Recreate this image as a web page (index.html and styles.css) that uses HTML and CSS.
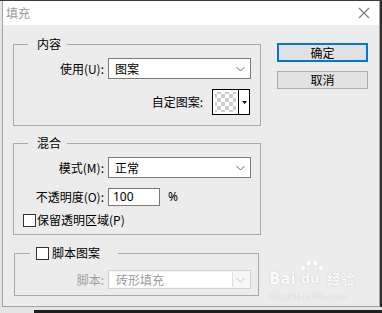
FILE: index.html
```html
<!DOCTYPE html>
<html lang="zh">
<head>
<meta charset="utf-8">
<title>填充</title>
<link rel="stylesheet" href="styles.css">
</head>
<body>
<div class="screen">
  <div class="topline"></div>
  <div class="mid">
    <div class="edge-left"></div>
    <div class="dialog">
      <div class="titlebar">
        <span class="title">填充</span>
        <svg class="close" width="12" height="12" viewBox="0 0 12 12"><path d="M1 1 L11 11 M11 1 L1 11" stroke="#7a7a7a" stroke-width="1.1" fill="none"/></svg>
      </div>
      <div class="body">
        <div class="groups">
          <fieldset class="group g1">
            <legend class="legend">内容</legend>
            <div class="row r-select">
              <span class="lbl">使用(U):</span>
              <div class="select"><span class="val">图案</span><svg class="chev" width="9" height="6" viewBox="0 0 9 6"><path d="M0.5 1 L4.5 5 L8.5 1" stroke="#6d6d6d" fill="none"/></svg></div>
            </div>
            <div class="row r-swatch">
              <span class="lbl2">自定图案:</span>
              <div class="swatch">
                <div class="checker"></div>
                <div class="swatch-arrow"><svg width="5" height="3" viewBox="0 0 5 3"><path d="M0 0 H5 L2.5 3 Z" fill="#000"/></svg></div>
              </div>
            </div>
          </fieldset>

          <fieldset class="group g2">
            <legend class="legend">混合</legend>
            <div class="row r-select">
              <span class="lbl">模式(M):</span>
              <div class="select"><span class="val">正常</span><svg class="chev" width="9" height="6" viewBox="0 0 9 6"><path d="M0.5 1 L4.5 5 L8.5 1" stroke="#6d6d6d" fill="none"/></svg></div>
            </div>
            <div class="row r-input">
              <span class="lbl">不透明度(O):</span>
              <div class="input">100</div>
              <span class="pct">%</span>
            </div>
            <div class="row r-check">
              <span class="checkbox"></span>
              <span class="check-text">保留透明区域(P)</span>
            </div>
          </fieldset>

          <fieldset class="group g3">
            <legend class="legend legend-check"><span class="checkbox"></span><span class="check-text">脚本图案</span></legend>
            <div class="row r-disabled">
              <span class="lbl lbl-dis">脚本:</span>
              <div class="select select-dis"><span class="val-box">砖形填充</span><svg class="chev" width="9" height="6" viewBox="0 0 9 6"><path d="M0.5 1 L4.5 5 L8.5 1" stroke="#c4c4c4" fill="none"/></svg></div>
            </div>
          </fieldset>
        </div>
        <div class="buttons">
          <div class="btn btn-default">确定</div>
          <div class="btn">取消</div>
        </div>
      </div>
      <div class="watermark">
        <div class="wm-logo">
          <span class="wm-bai">Bai</span>
          <span class="wm-paw">
            <svg width="26" height="16" viewBox="0 0 26 16"><ellipse cx="4" cy="10" rx="2.6" ry="3.2" fill="#fbfbfb" stroke="#d9d9d9" stroke-width="0.6"/><ellipse cx="9.5" cy="5" rx="2.8" ry="3.4" fill="#fbfbfb" stroke="#d9d9d9" stroke-width="0.6"/><ellipse cx="16.5" cy="5" rx="2.8" ry="3.4" fill="#fbfbfb" stroke="#d9d9d9" stroke-width="0.6"/><ellipse cx="22" cy="10" rx="2.6" ry="3.2" fill="#fbfbfb" stroke="#d9d9d9" stroke-width="0.6"/></svg>
            <span class="wm-du">du</span>
          </span>
          <span class="wm-jy">经验</span>
        </div>
        <div class="wm-url">jingyan.baidu.com</div>
      </div>
    </div>
    <div class="edge-right"></div>
  </div>
  <div class="bottom"><div class="bottom-dark"></div></div>
</div>
</body>
</html>
```

FILE: styles.css
```css
* { box-sizing: border-box; }
html, body { margin: 0; padding: 0; }
body {
  width: 382px;
  height: 313px;
  overflow: hidden;
  font-family: "Noto Sans CJK SC", "Noto Sans", sans-serif;
  font-size: 12px;
  color: #000;
}
.screen {
  width: 382px;
  height: 313px;
  background: #e4e4e4;
  display: flex;
  flex-direction: column;
}
.topline { height: 1px; background: #3c3c3c; }
.mid { display: flex; height: 306px; }
.edge-left { width: 2px; background: #e4e4e4; }
.edge-right { flex: 1; background: #2f2f2f; }
.dialog {
  position: relative;
  width: 378px;
  height: 306px;
  background: #ececec;
  border-left: 1px solid #a3a3a3;
  border-right: 1px solid #a3a3a3;
  border-bottom: 1px solid #a3a3a3;
  display: flex;
  flex-direction: column;
}
.titlebar {
  height: 24px;
  background: #fff;
  display: flex;
  align-items: center;
  justify-content: space-between;
  padding: 0 9px 0 3px;
}
.title { color: #9b9b9b; font-size: 12px; line-height: 16px; }
.close { display: block; }

.body {
  display: flex;
  padding: 11px 0 0 10px;
}
.groups { width: 248px; display: flex; flex-direction: column; }
.group {
  margin: 0;
  border: 1px solid #a9a9a9;
  padding: 0 0 0 0;
  min-width: 0;
}
.legend {
  margin-left: 14px;
  padding: 0 6px 0 9px;
  line-height: 16px;
  height: 16px;
}
.g1 { padding-bottom: 10px; }
.g2 { margin-top: 9px; padding-bottom: 5px; }
.g3 { margin: 10px 2px 0 1px; padding-bottom: 6px; }

.row { display: flex; align-items: center; }
.lbl {
  width: 90px;
  text-align: right;
  white-space: nowrap;
  margin-right: 4px;
  line-height: 16px;
}
.r-select { margin-top: 6px; height: 21px; }
.select {
  width: 143px;
  height: 21px;
  background: #fff;
  border: 1px solid #7a7a7a;
  display: flex;
  align-items: center;
  justify-content: space-between;
  padding: 0 5px 0 6px;
}
.val { line-height: 16px; }
.chev { display: block; }

.r-swatch {
  margin-top: 10px;
  height: 26px;
  justify-content: flex-end;
  padding-right: 10px;
}
.lbl2 { margin-right: 9px; line-height: 16px; }
.swatch {
  width: 38px;
  height: 26px;
  border: 1px solid #000;
  background: #fff;
  display: flex;
}
.checker {
  width: 26px;
  padding: 2px;
  border-right: 1px solid #000;
  background-clip: content-box;
  background-color: #fff;
  background-image:
    linear-gradient(45deg, #cdcdcd 25%, transparent 25%, transparent 75%, #cdcdcd 75%),
    linear-gradient(45deg, #cdcdcd 25%, transparent 25%, transparent 75%, #cdcdcd 75%);
  background-size: 8px 8px;
  background-position: 2px 2px, 6px 6px;
  background-origin: content-box;
}
.swatch-arrow {
  flex: 1;
  display: flex;
  align-items: center;
  justify-content: center;
}
.swatch-arrow svg { display: block; }

.r-input { margin-top: 10px; height: 18px; }
.input {
  width: 52px;
  height: 18px;
  background: #fff;
  border: 1px solid #7a7a7a;
  padding-left: 4px;
  line-height: 16px;
  font-family: "Noto Sans", "Noto Sans CJK SC", sans-serif;
}
.pct {
  margin-left: 8px;
  font-family: "Noto Sans", sans-serif;
  line-height: 16px;
}
.r-check { margin-top: 5px; height: 18px; padding-left: 9px; }
.checkbox {
  display: block;
  width: 13px;
  height: 13px;
  border: 1px solid #333;
  background: #fff;
  flex: none;
}
.check-text { margin-left: 1px; line-height: 16px; white-space: nowrap; }

.legend-check {
  display: flex;
  align-items: center;
  margin-left: 15px;
  padding: 0 18px 0 6px;
}
.legend-check .check-text { margin-left: 3px; }

.r-disabled { margin-top: 9px; height: 19px; }
.lbl-dis { width: 89px; color: #a0a0a0; }
.select-dis {
  width: 143px;
  height: 19px;
  border: 1px solid #d2d2d2;
  background: #f7f7f7;
  padding: 1px 5px 1px 1px;
}
.val-box {
  width: 123px;
  height: 100%;
  background: #fff;
  border-right: 1px solid #e0e0e0;
  color: #9a9a9a;
  padding-left: 6px;
  line-height: 15px;
}

.buttons {
  margin-left: 16px;
  padding-top: 7px;
  width: 91px;
  display: flex;
  flex-direction: column;
}
.btn {
  height: 18px;
  background: #e1e1e1;
  border: 1px solid #adadad;
  text-align: center;
  line-height: 16px;
  margin-top: 9px;
}
.btn-default {
  height: 19px;
  border: 2px solid #0078d7;
  line-height: 15px;
  margin-top: 0;
}

.bottom { flex: 1; display: flex; }
.bottom-dark {
  margin: 3px 0 0 34px;
  flex: 1;
  background: #1f1f1f;
}

.watermark {
  position: absolute;
  left: 263px;
  top: 257px;
  width: 92px;
  color: #fbfbfb;
  text-shadow: 0 0 1px rgba(0,0,0,0.25);
}
.wm-logo { display: flex; align-items: flex-end; height: 28px; }
.wm-bai {
  font-family: "DejaVu Sans", sans-serif;
  font-weight: bold;
  font-size: 15px;
  line-height: 14px;
  margin-left: 3px;
}
.wm-paw {
  position: relative;
  width: 26px;
  height: 28px;
  margin-left: 3px;
}
.wm-paw svg { position: absolute; left: 0; top: 0; }
.wm-du {
  position: absolute;
  left: 2px;
  bottom: 0;
  font-family: "DejaVu Sans", sans-serif;
  font-weight: bold;
  font-size: 13px;
  line-height: 14px;
}
.wm-jy {
  font-size: 14px;
  line-height: 16px;
  margin-left: 2px;
  font-weight: bold;
}
.wm-url {
  font-family: "Liberation Serif", serif;
  font-size: 10px;
  line-height: 12px;
  margin-top: 4px;
  margin-left: 3px;
  letter-spacing: 0.2px;
}
```
